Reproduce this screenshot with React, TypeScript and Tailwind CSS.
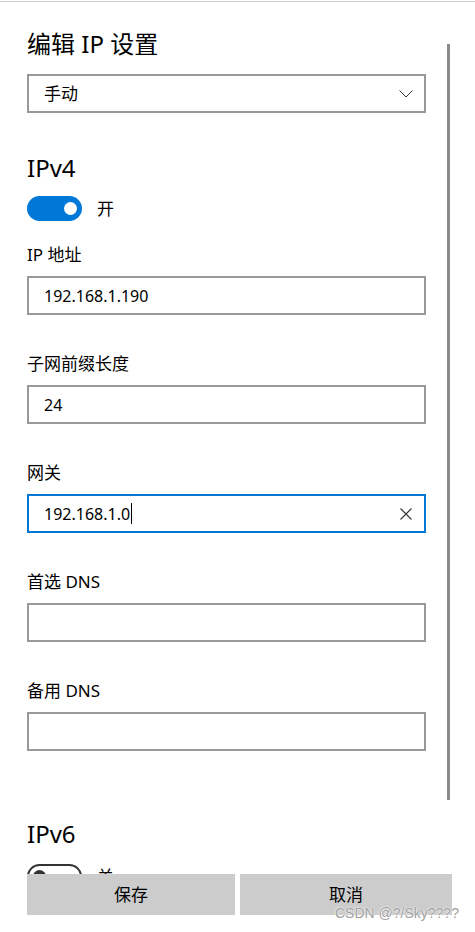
import React from 'react';

const fields = [
    { label: 'IP 地址', value: '192.168.1.190' },
    { label: '子网前缀长度', value: '24' },
    { label: '网关', value: '192.168.1.0', focused: true },
    { label: '首选 DNS', value: '' },
    { label: '备用 DNS', value: '' },
];

const Chevron: React.FC = () => (
    <svg width="14" height="8" viewBox="0 0 14 8" fill="none">
        <path d="M0.5 0.5 L7 7 L13.5 0.5" stroke="#333" strokeWidth="1" />
    </svg>
);

const ClearIcon: React.FC = () => (
    <svg width="12" height="12" viewBox="0 0 12 12" fill="none">
        <path d="M0.5 0.5 L11.5 11.5 M11.5 0.5 L0.5 11.5" stroke="#333" strokeWidth="1.1" />
    </svg>
);

const Field: React.FC<{ label: string; value: string; focused?: boolean; first?: boolean }> = ({ label, value, focused, first }) => (
    <div className={first ? 'mt-[22px]' : 'mt-[37px]'}>
        <div className="text-[17px] leading-[24px] text-black">{label}</div>
        <div
            className={`mt-[9px] h-[39px] border-2 flex items-center justify-between pl-[15px] pr-[12px] ${
                focused ? 'border-[#0078d7]' : 'border-[#999999]'
            }`}
        >
            <div className="flex items-center text-[16px] text-black">
                {value}
                {focused && <span className="inline-block w-px h-[21px] bg-black ml-px" />}
            </div>
            {focused && <ClearIcon />}
        </div>
    </div>
);

const App: React.FC = () => {
    return (
        <div className="relative w-[475px] h-[932px] overflow-hidden bg-white flex flex-col font-['Noto_Sans','Noto_Sans_CJK_SC',sans-serif]">
            <div className="h-px mt-px bg-[#d0d0d0]" />

            <div className="h-[872px] overflow-hidden pl-[27px] pr-[49px]">
                <div className="mt-[26px] text-[24px] leading-[32px] text-black">编辑 IP 设置</div>

                <div className="mt-[14px] h-[39px] border-2 border-[#999999] flex items-center justify-between pl-[15px] pr-[11px]">
                    <span className="text-[17px] text-black">手动</span>
                    <Chevron />
                </div>

                <div className="mt-[39px] text-[24px] leading-[32px] text-black">IPv4</div>
                <div className="mt-[12px] h-[25px] flex items-center">
                    <div className="w-[55px] h-[25px] rounded-full bg-[#0078d7] flex items-center justify-end pr-[5px]">
                        <div className="w-[13px] h-[13px] rounded-full bg-white" />
                    </div>
                    <span className="ml-[15px] text-[17px] text-black">开</span>
                </div>

                {fields.map((f, i) => (
                    <Field key={f.label} label={f.label} value={f.value} focused={f.focused} first={i === 0} />
                ))}

                <div className="mt-[67px] text-[24px] leading-[32px] text-black">IPv6</div>
                <div className="mt-[14px] h-[25px] flex items-center">
                    <div className="w-[55px] h-[25px] rounded-full border-2 border-[#333] flex items-center pl-[4px]">
                        <div className="w-[13px] h-[13px] rounded-full bg-[#333]" />
                    </div>
                    <span className="ml-[15px] text-[17px] text-black">关</span>
                </div>
            </div>

            <div className="flex gap-[5px] pl-[27px] h-[41px]">
                <button className="w-[208px] h-full bg-[#cccccc] text-[17px] text-black">保存</button>
                <button className="w-[212px] h-full bg-[#cccccc] text-[17px] text-black">取消</button>
            </div>

            <div className="absolute left-[335px] top-[904px] text-[14px] leading-[18px] text-[#a0a0a0] font-['Liberation_Sans',sans-serif] [text-shadow:0_0_2px_#fff,0_0_1px_#fff]">
                CSDN @?/Sky????
            </div>

            <div className="absolute left-[447px] top-[44px] w-[3px] h-[756px] bg-[#8a8a8a]" />
        </div>
    );
};

export default App;
